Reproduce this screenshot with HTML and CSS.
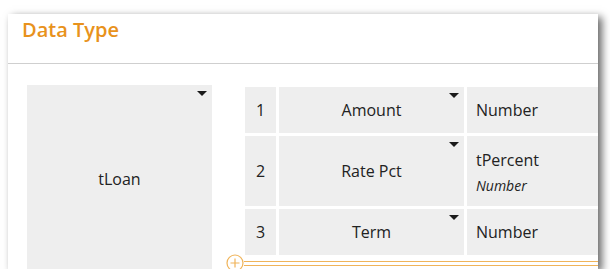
FILE: index.html
```html
<!DOCTYPE html>
<html>
<head>
<meta charset="utf-8">
<link rel="stylesheet" href="styles.css">
</head>
<body>
<div class="card">
  <div class="card-header">
    <h1 class="title">Data Type</h1>
  </div>
  <div class="card-body">
    <div class="type-box">
      <span class="caret"></span>
      <span class="type-name">tLoan</span>
    </div>
    <div class="fields">
      <div class="grid">
        <div class="cell num">1</div>
        <div class="cell name"><span class="caret"></span>Amount</div>
        <div class="cell type">Number</div>

        <div class="cell num">2</div>
        <div class="cell name"><span class="caret"></span>Rate Pct</div>
        <div class="cell type type-stack"><span class="type-main">tPercent</span><span class="type-sub">Number</span></div>

        <div class="cell num">3</div>
        <div class="cell name"><span class="caret"></span>Term</div>
        <div class="cell type">Number</div>
      </div>
      <div class="add-bar">
        <svg class="add-icon" width="18" height="18" viewBox="0 0 18 18">
          <circle cx="9" cy="9" r="8" fill="#fff" stroke="#f0b45a" stroke-width="1.2"/>
          <path d="M9 4.5v9M4.5 9h9" stroke="#f0b45a" stroke-width="1.2"/>
        </svg>
        <div class="add-line"></div>
      </div>
    </div>
  </div>
</div>
</body>
</html>
```
FILE: styles.css
```css
html, body {
  margin: 0;
  padding: 0;
  background: #fff;
}

body {
  font-family: "Open Sans", "Liberation Sans", sans-serif;
  color: #222;
}

.card {
  margin: 14px 0 0 8px;
  width: 590px;
  height: 255px;
  background: #fff;
  box-shadow: 4px 3px 8px rgba(0, 0, 0, 0.6);
  overflow: hidden;
}

.card-header {
  border-bottom: 1px solid #cfcfcf;
  padding: 3px 0 0 14px;
  box-sizing: border-box;
  height: 50px;
}

.title {
  margin: 0;
  font-size: 20px;
  line-height: 26px;
  font-weight: 600;
  color: #e8921c;
}

.card-body {
  display: flex;
  align-items: flex-start;
  padding: 21px 0 0 19px;
  gap: 33px;
}

.type-box {
  position: relative;
  width: 185px;
  height: 188px;
  flex: none;
  background: #eeeeee;
  display: flex;
  align-items: center;
  justify-content: center;
  font-size: 16px;
}

.caret {
  position: absolute;
  top: 6px;
  right: 5px;
  width: 0;
  height: 0;
  border-left: 5px solid transparent;
  border-right: 5px solid transparent;
  border-top: 5px solid #1a1a1a;
}

.fields {
  margin-top: 2px;
  flex: none;
}

.grid {
  display: grid;
  grid-template-columns: 31px 185px 160px;
  grid-template-rows: 46px 70px 46px;
  gap: 3px;
}

.cell {
  position: relative;
  background: #eeeeee;
  font-size: 16px;
  display: flex;
  align-items: center;
}

.num, .name {
  justify-content: center;
}

.type {
  padding-left: 9px;
}

.type-stack {
  flex-direction: column;
  align-items: flex-start;
  justify-content: flex-start;
  padding-top: 13px;
}

.type-main {
  line-height: 22px;
}

.type-sub {
  font-style: italic;
  font-size: 14px;
  line-height: 30px;
}

.add-bar {
  display: flex;
  align-items: center;
  margin-left: -19px;
  margin-top: -1px;
}

.add-icon {
  flex: none;
  display: block;
}

.add-line {
  width: 360px;
  height: 3px;
  border-top: 1px solid #f0b45a;
  border-bottom: 1px solid #f0b45a;
}
```
